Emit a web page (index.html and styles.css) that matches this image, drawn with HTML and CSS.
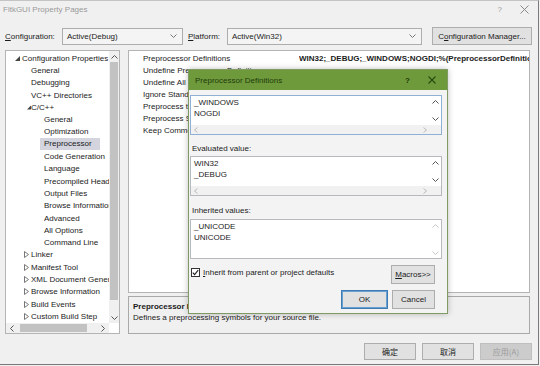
FILE: index.html
```html
<!DOCTYPE html>
<html lang="en">

<head>
  <meta charset="UTF-8">
  <title>FltkGUI Property Pages</title>
  <link rel="stylesheet" href="styles.css">
</head>

<body>
  <div class="window">
    <header class="titlebar">
      <span class="titlebar__text">FltkGUI Property Pages</span>
      <span class="titlebar__help">?</span>
      <svg class="titlebar__close" width="9" height="9" viewBox="0 0 9 9">
        <path d="M0.5 0.5 L8.5 8.5 M8.5 0.5 L0.5 8.5" stroke="#8a8a8a" stroke-width="1" fill="none" />
      </svg>
    </header>

    <div class="config">
      <label class="config__label"><u>C</u>onfiguration:</label>
      <div class="select select--config">
        <span>Active(Debug)</span>
        <svg width="7" height="4" viewBox="0 0 7 4"><polyline points="0.5,0.5 3.5,3.5 6.5,0.5" stroke="#777" fill="none" /></svg>
      </div>
      <label class="config__label config__label--platform"><u>P</u>latform:</label>
      <div class="select select--platform">
        <span>Active(Win32)</span>
        <svg width="7" height="4" viewBox="0 0 7 4"><polyline points="0.5,0.5 3.5,3.5 6.5,0.5" stroke="#777" fill="none" /></svg>
      </div>
      <button class="btn btn--manager">C<u>o</u>nfiguration Manager...</button>
    </div>

    <main class="content">
      <nav class="tree">
        <ul class="tree__list">
          <li class="tree__row l0"><span class="tree__arrow"><svg width="5" height="5" viewBox="0 0 5 5"><polygon points="5,0 5,5 0,5" fill="#444" /></svg></span>Configuration Properties</li>
          <li class="tree__row l1"><span class="tree__arrow"></span>General</li>
          <li class="tree__row l1"><span class="tree__arrow"></span>Debugging</li>
          <li class="tree__row l1"><span class="tree__arrow"></span>VC++ Directories</li>
          <li class="tree__row l1"><span class="tree__arrow tree__arrow--open"><svg width="5" height="5" viewBox="0 0 5 5"><polygon points="5,0 5,5 0,5" fill="#444" /></svg></span>C/C++</li>
          <li class="tree__row l2"><span class="tree__arrow"></span>General</li>
          <li class="tree__row l2"><span class="tree__arrow"></span>Optimization</li>
          <li class="tree__row l2 tree__row--selected"><span class="tree__arrow"></span><span class="tree__sel">Preprocessor</span></li>
          <li class="tree__row l2"><span class="tree__arrow"></span>Code Generation</li>
          <li class="tree__row l2"><span class="tree__arrow"></span>Language</li>
          <li class="tree__row l2"><span class="tree__arrow"></span>Precompiled Headers</li>
          <li class="tree__row l2"><span class="tree__arrow"></span>Output Files</li>
          <li class="tree__row l2"><span class="tree__arrow"></span>Browse Information</li>
          <li class="tree__row l2"><span class="tree__arrow"></span>Advanced</li>
          <li class="tree__row l2"><span class="tree__arrow"></span>All Options</li>
          <li class="tree__row l2"><span class="tree__arrow"></span>Command Line</li>
          <li class="tree__row l1"><span class="tree__arrow"><svg width="5" height="7" viewBox="0 0 5 7"><polygon points="0.5,0.5 4.5,3.5 0.5,6.5" stroke="#777" fill="none" /></svg></span>Linker</li>
          <li class="tree__row l1"><span class="tree__arrow"><svg width="5" height="7" viewBox="0 0 5 7"><polygon points="0.5,0.5 4.5,3.5 0.5,6.5" stroke="#777" fill="none" /></svg></span>Manifest Tool</li>
          <li class="tree__row l1"><span class="tree__arrow"><svg width="5" height="7" viewBox="0 0 5 7"><polygon points="0.5,0.5 4.5,3.5 0.5,6.5" stroke="#777" fill="none" /></svg></span>XML Document Generator</li>
          <li class="tree__row l1"><span class="tree__arrow"><svg width="5" height="7" viewBox="0 0 5 7"><polygon points="0.5,0.5 4.5,3.5 0.5,6.5" stroke="#777" fill="none" /></svg></span>Browse Information</li>
          <li class="tree__row l1"><span class="tree__arrow"><svg width="5" height="7" viewBox="0 0 5 7"><polygon points="0.5,0.5 4.5,3.5 0.5,6.5" stroke="#777" fill="none" /></svg></span>Build Events</li>
          <li class="tree__row l1"><span class="tree__arrow"><svg width="5" height="7" viewBox="0 0 5 7"><polygon points="0.5,0.5 4.5,3.5 0.5,6.5" stroke="#777" fill="none" /></svg></span>Custom Build Step</li>
        </ul>
        <div class="vscroll">
          <svg class="vscroll__up" width="7" height="4" viewBox="0 0 7 4"><polyline points="0.5,3.5 3.5,0.5 6.5,3.5" stroke="#555" fill="none" /></svg>
          <div class="vscroll__track"><div class="vscroll__thumb"></div></div>
          <svg class="vscroll__down" width="7" height="4" viewBox="0 0 7 4"><polyline points="0.5,0.5 3.5,3.5 6.5,0.5" stroke="#555" fill="none" /></svg>
        </div>
        <div class="hscroll">
          <svg width="4" height="7" viewBox="0 0 4 7"><polyline points="3.5,0.5 0.5,3.5 3.5,6.5" stroke="#555" fill="none" /></svg>
          <div class="hscroll__track"><div class="hscroll__thumb"></div></div>
          <svg width="4" height="7" viewBox="0 0 4 7"><polyline points="0.5,0.5 3.5,3.5 0.5,6.5" stroke="#555" fill="none" /></svg>
        </div>
      </nav>

      <section class="props">
        <div class="grid">
          <div class="grid__row"><span class="grid__name">Preprocessor Definitions</span><span class="grid__value">WIN32;_DEBUG;_WINDOWS;NOGDI;%(PreprocessorDefinitions)</span></div>
          <div class="grid__row"><span class="grid__name">Undefine Preprocessor Definitions</span><span class="grid__value"></span></div>
          <div class="grid__row"><span class="grid__name">Undefine All Preprocessor Definitions</span><span class="grid__value"></span></div>
          <div class="grid__row"><span class="grid__name">Ignore Standard Include Paths</span><span class="grid__value"></span></div>
          <div class="grid__row"><span class="grid__name">Preprocess to a File</span><span class="grid__value"></span></div>
          <div class="grid__row"><span class="grid__name">Preprocess Suppress Line Numbers</span><span class="grid__value"></span></div>
          <div class="grid__row"><span class="grid__name">Keep Comments</span><span class="grid__value"></span></div>
        </div>
        <div class="desc">
          <div class="desc__title">Preprocessor Definitions</div>
          <div class="desc__text">Defines a preprocessing symbols for your source file.</div>
        </div>
      </section>
    </main>

    <footer class="footer">
      <button class="btn btn--cjk">确定</button>
      <button class="btn btn--cjk">取消</button>
      <button class="btn btn--cjk btn--disabled">应用(A)</button>
    </footer>

    <!-- modal editor dialog over the property page -->
    <div class="dialog">
      <div class="dialog__title">
        <span>Preprocessor Definitions</span>
        <span class="dialog__help">?</span>
        <svg class="dialog__close" width="8" height="8" viewBox="0 0 8 8">
          <path d="M0.5 0.5 L7.5 7.5 M7.5 0.5 L0.5 7.5" stroke="#2a4a10" stroke-width="1.1" fill="none" />
        </svg>
      </div>

      <div class="dialog__body">
        <div class="editbox editbox--focus">
          <div class="editbox__main">
            <div class="editbox__text">_WINDOWS<br>NOGDI</div>
            <div class="editbox__vbar">
              <svg width="7" height="4" viewBox="0 0 7 4"><polyline points="0.5,3.5 3.5,0.5 6.5,3.5" stroke="#555" fill="none" /></svg>
              <svg width="7" height="4" viewBox="0 0 7 4"><polyline points="0.5,0.5 3.5,3.5 6.5,0.5" stroke="#555" fill="none" /></svg>
            </div>
          </div>
          <div class="editbox__hbar">
            <svg width="4" height="6" viewBox="0 0 4 6"><polyline points="3.5,0.5 0.5,3 3.5,5.5" stroke="#bbb" fill="none" /></svg>
            <svg width="4" height="6" viewBox="0 0 4 6"><polyline points="0.5,0.5 3.5,3 0.5,5.5" stroke="#bbb" fill="none" /></svg>
          </div>
        </div>

        <div class="dialog__label dialog__label--first">Evaluated value:</div>
        <div class="editbox">
          <div class="editbox__main">
            <div class="editbox__text">WIN32<br>_DEBUG</div>
            <div class="editbox__vbar">
              <svg width="7" height="4" viewBox="0 0 7 4"><polyline points="0.5,3.5 3.5,0.5 6.5,3.5" stroke="#555" fill="none" /></svg>
              <svg width="7" height="4" viewBox="0 0 7 4"><polyline points="0.5,0.5 3.5,3.5 6.5,0.5" stroke="#555" fill="none" /></svg>
            </div>
          </div>
          <div class="editbox__hbar">
            <svg width="4" height="6" viewBox="0 0 4 6"><polyline points="3.5,0.5 0.5,3 3.5,5.5" stroke="#bbb" fill="none" /></svg>
            <svg width="4" height="6" viewBox="0 0 4 6"><polyline points="0.5,0.5 3.5,3 0.5,5.5" stroke="#bbb" fill="none" /></svg>
          </div>
        </div>

        <div class="dialog__label dialog__label--second">Inherited values:</div>
        <div class="editbox">
          <div class="editbox__main editbox__main--full">
            <div class="editbox__text">_UNICODE<br>UNICODE</div>
            <div class="editbox__vbar">
              <svg width="7" height="4" viewBox="0 0 7 4"><polyline points="0.5,3.5 3.5,0.5 6.5,3.5" stroke="#c8c8c8" fill="none" /></svg>
              <svg width="7" height="4" viewBox="0 0 7 4"><polyline points="0.5,0.5 3.5,3.5 6.5,0.5" stroke="#c8c8c8" fill="none" /></svg>
            </div>
          </div>
        </div>

        <div class="dialog__options">
          <label class="check">
            <span class="check__box">
              <svg width="7" height="7" viewBox="0 0 7 7"><polyline points="0.8,3.6 2.6,5.6 6.2,1.2" stroke="#222" stroke-width="1.1" fill="none" /></svg>
            </span>
            <span><u>I</u>nherit from parent or project defaults</span>
          </label>
          <button class="btn btn--macros"><u>M</u>acros&gt;&gt;</button>
        </div>

        <div class="dialog__actions">
          <button class="btn btn--ok">OK</button>
          <button class="btn btn--cancel">Cancel</button>
        </div>
      </div>
    </div>
  </div>
</body>

</html>
```

FILE: styles.css
```css
* {
  box-sizing: border-box;
}

body {
  margin: 0;
  background: #f0f0f0;
  font-family: "Liberation Sans", Arial, sans-serif;
  font-size: 8px;
  color: #1b1b1b;
}

ul {
  margin: 0;
  padding: 0;
  list-style: none;
}

u {
  text-decoration-thickness: 1px;
  text-underline-offset: 1px;
}

.window {
  position: relative;
  width: 539px;
  height: 365px;
  padding: 0 6px 0 5px;
  border-top: 1px solid #c4c4c4;
  border-right: 1px solid #7a7a7a;
  border-bottom: 1px solid #7a7a7a;
}

/* title bar */

.titlebar {
  display: flex;
  align-items: center;
  height: 16px;
  margin-left: -2px;
  color: #9a9a9a;
}

.titlebar__text {
  flex: 1;
}

.titlebar__help {
  margin-right: 18px;
  font-size: 8px;
}

.titlebar__close {
  margin-right: 3px;
}

/* configuration row */

.config {
  display: flex;
  align-items: center;
  height: 18px;
  margin-top: 10px;
}

.config__label {
  width: 57px;
}

.config__label--platform {
  width: 39px;
  margin-left: 5px;
}

.select {
  display: flex;
  align-items: center;
  justify-content: space-between;
  height: 17px;
  padding: 0 5px 0 4px;
  background: #f4f4f4;
  border: 1px solid #adadad;
}

.select--config {
  width: 121px;
}

.select--platform {
  width: 195px;
}

.btn {
  height: 17px;
  padding: 0;
  background: #e1e1e1;
  border: 1px solid #adadad;
  font-family: "Liberation Sans", Arial, sans-serif;
  font-size: 8px;
  color: #1b1b1b;
}

.btn--manager {
  width: 100px;
  margin-left: auto;
  height: 18px;
}

/* main area */

.content {
  display: flex;
  gap: 8px;
  height: 284px;
  margin-top: 5px;
}

.tree {
  position: relative;
  display: grid;
  grid-template-columns: 1fr 10px;
  grid-template-rows: 1fr 10px;
  width: 115px;
  background: #fff;
  border: 1px solid #b4b4b4;
  overflow: hidden;
}

.tree__list {
  padding-top: 1px;
  overflow: hidden;
  white-space: nowrap;
}

.tree__row {
  display: flex;
  align-items: center;
  height: 12.3px;
}

.tree__arrow {
  display: flex;
  align-items: center;
  width: 9px;
  flex-shrink: 0;
}

.l0 {
  padding-left: 7px;
}

.l0 .tree__arrow {
  width: 9px;
  padding-left: 2px;
}

.l1 {
  padding-left: 16px;
}

.l1 .tree__arrow--open {
  padding-left: 3px;
}

.l1 .tree__arrow svg {
  margin-left: 2px;
}

.l2 {
  padding-left: 29px;
}

.tree__row--selected .tree__arrow {
  width: 5px;
}

.tree__sel {
  display: block;
  width: 60px;
  height: 12px;
  line-height: 12px;
  padding-left: 4px;
  background: #d3d4de;
}

.vscroll {
  display: flex;
  flex-direction: column;
  align-items: center;
  background: #f0f0f0;
}

.vscroll__up {
  margin: 4px 0 3px;
}

.vscroll__down {
  margin: 5px 0 3px;
}

.vscroll__track {
  flex: 1;
  width: 100%;
  display: flex;
  justify-content: center;
}

.vscroll__thumb {
  width: 8px;
  height: 238px;
  background: #c2c2c2;
}

.hscroll {
  display: flex;
  align-items: center;
  gap: 4px;
  padding: 0 4px 0 4px;
  background: #f0f0f0;
}

.hscroll__track {
  flex: 1;
  height: 100%;
  display: flex;
  align-items: center;
}

.hscroll__thumb {
  width: 67px;
  height: 8px;
  margin-left: 2px;
  background: #c2c2c2;
}

.props {
  display: flex;
  flex-direction: column;
  gap: 3px;
  width: 402px;
}

.grid {
  flex: 1;
  padding-top: 2px;
  background: #fff;
  border: 1px solid #b4b4b4;
}

.grid__row {
  display: flex;
  height: 12px;
  line-height: 12px;
  white-space: nowrap;
}

.grid__name {
  width: 170px;
  padding-left: 14px;
  overflow: hidden;
}

.grid__value {
  flex: 1;
  font-weight: bold;
  overflow: hidden;
}

.desc {
  height: 38px;
  padding: 4px 4px 0;
  background: #f0f0f0;
  border: 1px solid #a9a9a9;
  line-height: 11px;
}

.desc__title {
  font-weight: bold;
}

/* footer buttons */

.footer {
  display: flex;
  justify-content: flex-end;
  gap: 6px;
  margin-top: 9px;
  padding-right: 0;
}

.btn--cjk {
  width: 52px;
  font-family: "Noto Sans CJK SC", "Liberation Sans", sans-serif;
  font-size: 8px;
}

.btn--disabled {
  background: #cccccc;
  border-color: #bfbfbf;
  color: #9b9b9b;
}

/* dialog */

.dialog {
  position: absolute;
  left: 188px;
  top: 68px;
  width: 260px;
  height: 245px;
  background: #f3f3f3;
  border: 1px solid #7f9b63;
  box-shadow: 0 0 6px rgba(0, 0, 0, 0.25);
}

.dialog__title {
  display: flex;
  align-items: center;
  height: 20px;
  padding-left: 6px;
  background: #6e9a3c;
  color: #1f3a0b;
}

.dialog__title span:first-child {
  flex: 1;
}

.dialog__help {
  margin-right: 18px;
  font-weight: bold;
}

.dialog__close {
  margin-right: 11px;
}

.dialog__body {
  padding: 5px 5px 0 1px;
}

.editbox {
  height: 40px;
  display: flex;
  flex-direction: column;
  background: #fff;
  border: 1px solid #b7b9bf;
}

.editbox--focus {
  border-color: #8fb1d6;
}

.editbox__main {
  display: flex;
  height: 29px;
}

.editbox__main--full {
  height: 38px;
}

.editbox__text {
  flex: 1;
  padding: 1px 0 0 3px;
  line-height: 11px;
}

.editbox__vbar {
  display: flex;
  flex-direction: column;
  justify-content: space-between;
  align-items: center;
  width: 12px;
  padding: 4px 0 4px;
}

.editbox__main--full .editbox__vbar {
  padding: 4px 0 3px;
}

.editbox__hbar {
  display: flex;
  align-items: center;
  justify-content: space-between;
  height: 9px;
  padding: 0 14px 0 3px;
  background: #f1f1f1;
}

.dialog__label {
  line-height: 11px;
  padding-left: 2px;
}

.dialog__label--first {
  padding-top: 8px;
  margin-bottom: 2px;
}

.dialog__label--second {
  padding-top: 9px;
  margin-bottom: 3px;
}

.dialog__options {
  display: flex;
  align-items: flex-start;
  justify-content: space-between;
  margin-top: 6px;
  padding-right: 7px;
}

.check {
  display: flex;
  align-items: center;
  gap: 3px;
  margin-top: 3px;
  padding-left: 1px;
}

.check__box {
  display: flex;
  align-items: center;
  justify-content: center;
  width: 9px;
  height: 9px;
  background: #fff;
  border: 1px solid #333;
}

.btn--macros {
  width: 44px;
  height: 19px;
}

.dialog__actions {
  display: flex;
  justify-content: flex-end;
  gap: 4px;
  margin-top: 6px;
  padding-right: 7px;
}

.btn--ok {
  width: 47px;
  height: 19px;
  border: 1px solid #3d7bb5;
  box-shadow: inset 0 0 0 1px #6aa0d0;
}

.btn--cancel {
  width: 43px;
  height: 19px;
}
```
